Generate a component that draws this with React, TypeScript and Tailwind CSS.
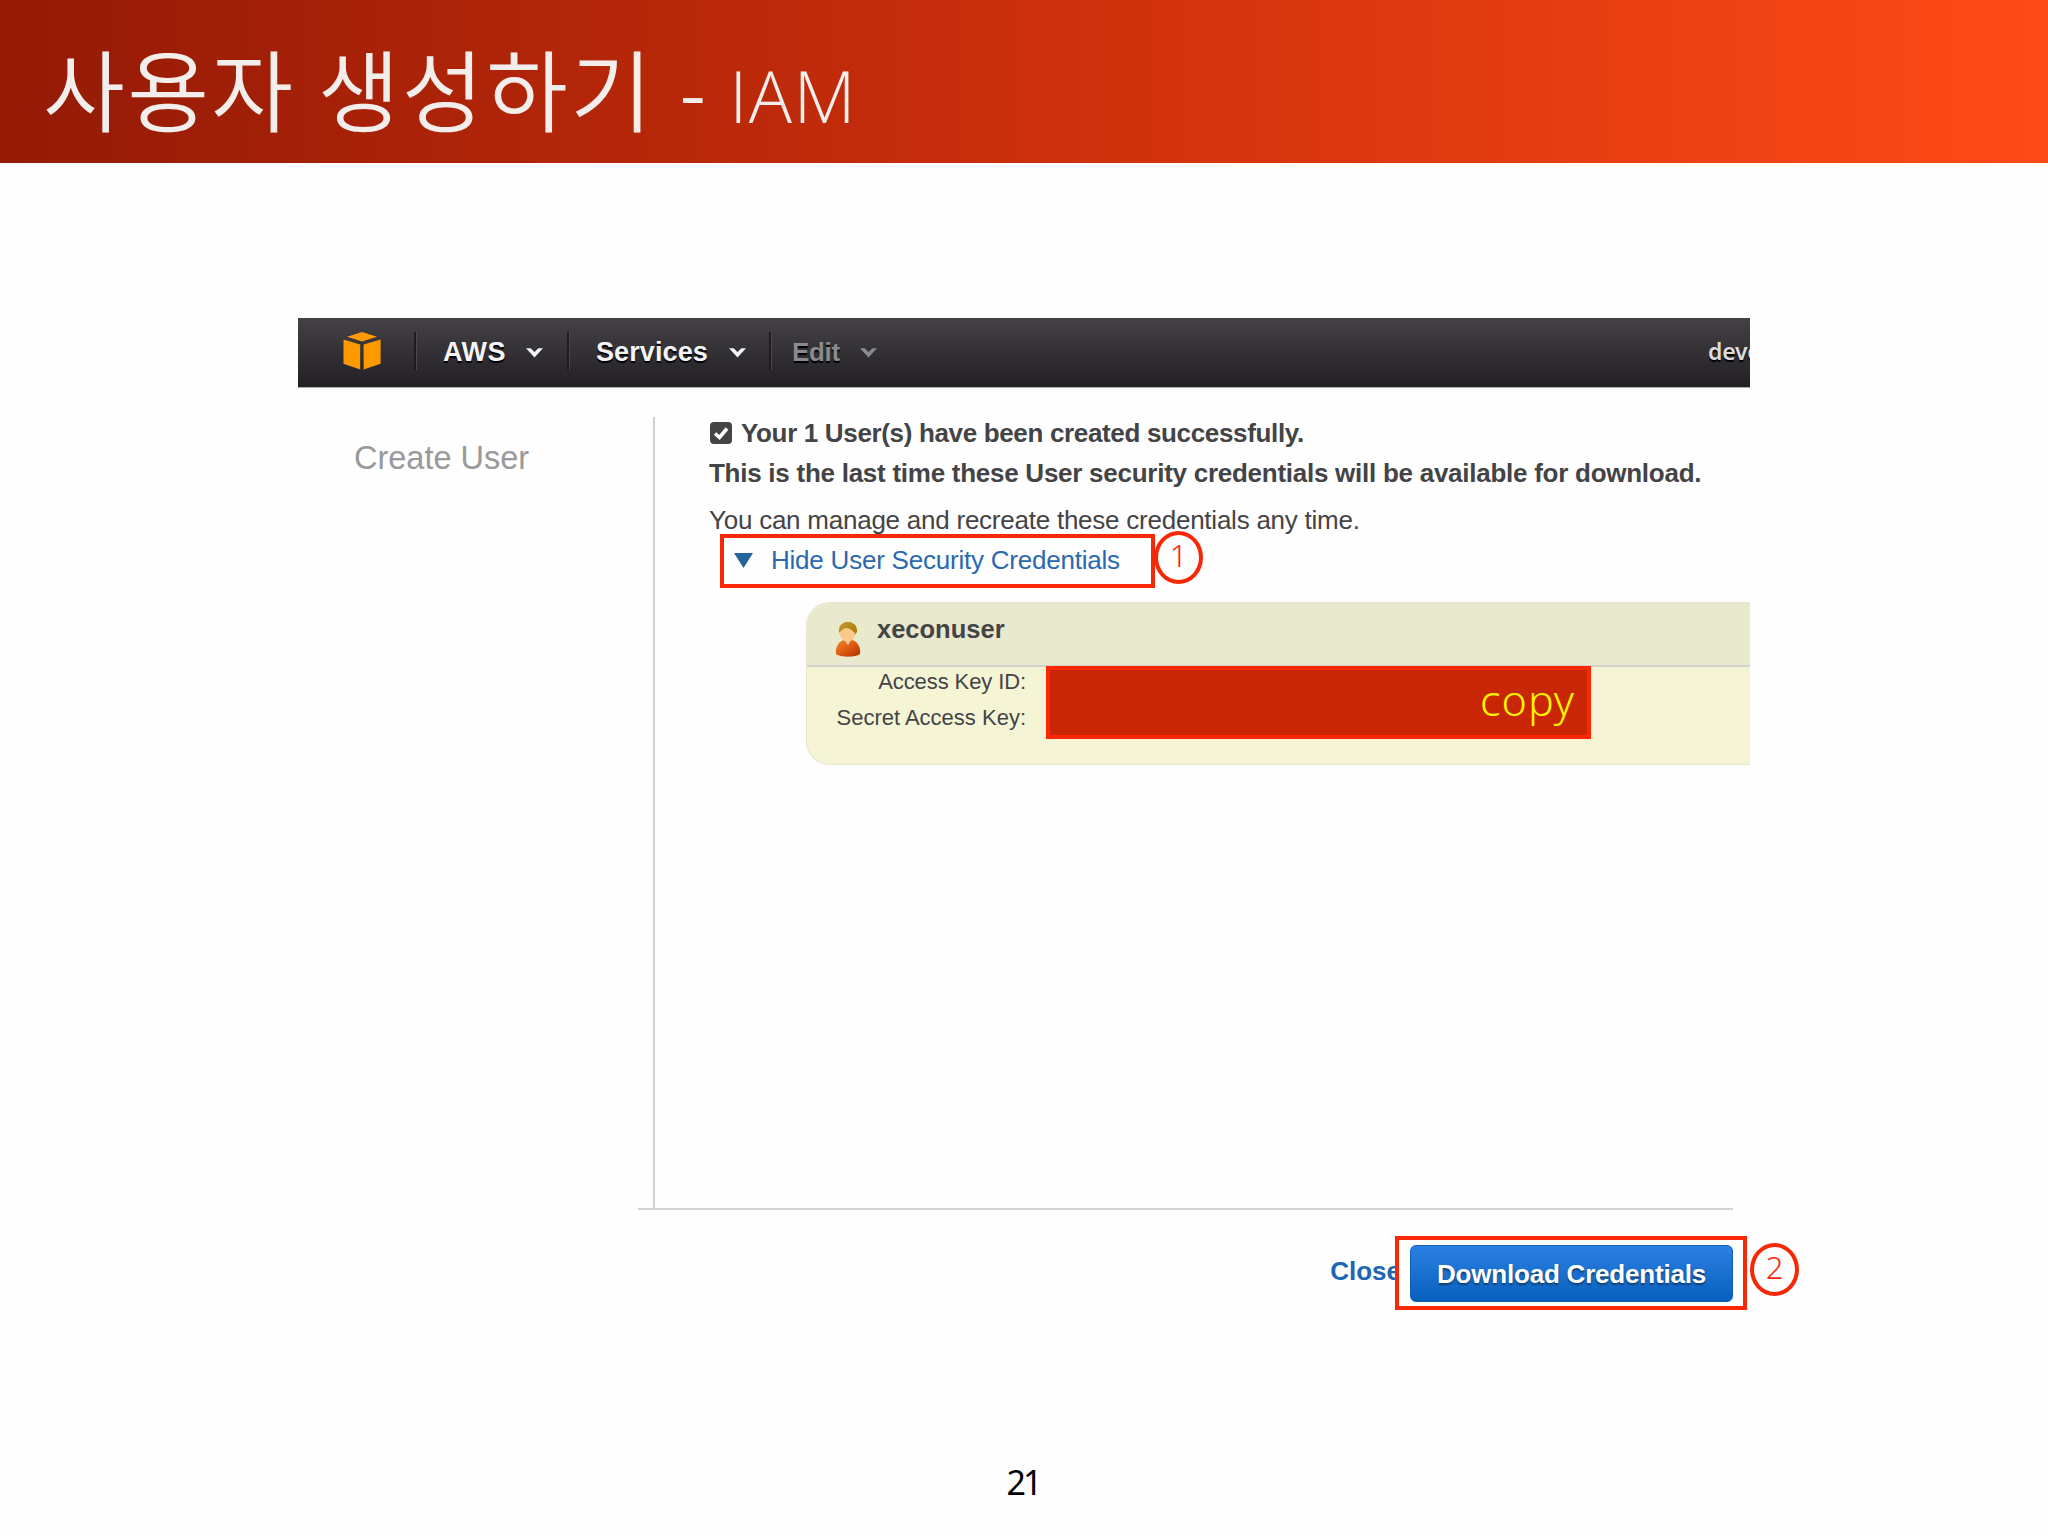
import { clsx } from "clsx"

const navItems = [
  { label: "AWS", box: "w-[153px] pl-[27px]", gap: "gap-[20px]", text: "text-[27px] tracking-[0.5px]", muted: false },
  { label: "Services", box: "w-[202px] pl-[27px]", gap: "gap-[21px]", text: "text-[27px] tracking-[0.1px]", muted: false },
  { label: "Edit", box: "w-[160px] pl-[21px]", gap: "gap-[20px]", text: "text-[26px] tracking-[-0.3px]", muted: true },
]

function Chevron({ className }: { className?: string }) {
  return (
    <svg viewBox="0 0 17 11" className={clsx("h-[11px] w-[17px]", className)} fill="currentColor">
      <path d="M0 1.2 H4.6 L8.5 5 L12.4 1.2 H17 L8.5 10.6 Z" />
    </svg>
  )
}

function CubeLogo() {
  return (
    <svg viewBox="0 0 38 38" className="h-[38px] w-[38px]" fill="#ff9900">
      <path d="M19 0 L34 4.8 L19 9.6 L4 4.8 Z" />
      <path d="M0.500 7.4 L17.2 12.4 V37.6 L0.500 31.8 Z" />
      <path d="M37.6 7.4 L20.6 12.4 V37.6 L37.6 31.8 Z" />
    </svg>
  )
}

function UserIcon() {
  return (
    <svg viewBox="0 0 26 35" className="h-[35px] w-[26px]">
      <defs>
        <linearGradient id="shirt" x1="0" y1="0" x2="1" y2="1">
          <stop offset="0" stopColor="#f08a2c" />
          <stop offset="0.5" stopColor="#dd5a12" />
          <stop offset="1" stopColor="#b32a00" />
        </linearGradient>
        <linearGradient id="hair" x1="0" y1="0" x2="1" y2="1">
          <stop offset="0" stopColor="#c79a35" />
          <stop offset="1" stopColor="#a87800" />
        </linearGradient>
      </defs>
      <path d="M1 32 C0 25 4 19 9 18 H17 C22 19 26 25 25 32 C21 35.5 5 35.5 1 32 Z" fill="url(#shirt)" />
      <path d="M4 10 C2.5 -3.5 23.500 -3.5 22 10 L19 14 H7 Z" fill="url(#hair)" />
      <path d="M4.500 10 C7 9 8 6 11 6 C15 6 17.500 9 20 11 C20 16 16.500 20 13 20 C9 20 4.500 15 4.500 10 Z" fill="#fbc98a" />
      <path d="M10.500 20 L13 23 L15 20 Z" fill="#d9cfc4" />
    </svg>
  )
}

function StepBadge({ children, className }: { children: string; className: string }) {
  return (
    <span
      className={clsx(
        "absolute flex items-center justify-center rounded-[50%] border-4 border-[#f62806] pb-[4px] font-['Noto_Sans',sans-serif] text-[31px] leading-none font-light text-[#f62806]",
        className
      )}
    >
      {children}
    </span>
  )
}

export default function App() {
  return (
    <div className="flex h-[1536px] w-[2048px] flex-col overflow-hidden bg-[#fefefe] font-['Liberation_Sans',Arial,sans-serif]">
      {/* Slide title */}
      <header className="h-[163px] shrink-0 bg-linear-to-r from-[#941a06] via-[#cb2f0c] to-[#ff4a17] pl-[43px] font-['Noto_Sans_CJK_KR',sans-serif] text-[#f3eeec]">
        <h1 className="flex items-baseline font-[350] whitespace-pre">
          <span className="text-[89px] leading-[174px] tracking-[2.3px]">사용자 생성하기</span>
          <span className="relative top-[-3px] ml-[8px] text-[77px]"> - </span>
          <span className="relative top-[-2px] ml-[6px] font-['Open_Sans',sans-serif] text-[72px] font-[350] tracking-[1.5px]">IAM</span>
        </h1>
      </header>

      {/* AWS console window */}
      <main className="relative mt-[155px] ml-[298px] w-[1452px]">
        <nav className="flex h-[70px] items-center overflow-hidden border-b border-[#a9a9ab] bg-linear-to-b from-[#444246] to-[#222024] pb-[3px]">
          <div className="flex w-[116px] pl-[45px]">
            <CubeLogo />
          </div>
          {navItems.map((item) => (
            <div
              key={item.label}
              className={clsx(
                "flex h-[38px] items-center border-l-2 border-[#1d1b1e] pt-[3px] shadow-[inset_1px_0_0_#4a484c]",
                item.box,
                item.gap,
                item.muted ? "text-[#8b8b8d]" : "text-[#f4f4f6]"
              )}
            >
              <span className={clsx("font-bold [text-shadow:0_2px_1px_#000]", item.text)}>{item.label}</span>
              <Chevron />
            </div>
          ))}
          <span className="ml-auto w-[42px] overflow-hidden font-['Noto_Sans',sans-serif] text-[23px] font-semibold tracking-[-0.2px] text-[#dcdcde] [text-shadow:0_2px_1px_#000]">
            deve
          </span>
        </nav>

        <div className="flex">
          <aside className="w-[355px] pt-[51px] pl-[56px] text-[32.500px] leading-[38px] whitespace-nowrap text-[#999]">
            Create User
          </aside>
          <section className="mt-[29px] h-[791px] flex-1 border-l-2 border-[#cfcdd2] pl-[54px] whitespace-nowrap text-[#444446]">
            <p className="flex items-center gap-[9px] pt-px text-[26px] leading-[30px] font-bold tracking-[-0.34px]">
              <svg viewBox="0 0 22 22" className="ml-px h-[22px] w-[22px]">
                <rect width="22" height="22" rx="4" fill="#444446" />
                <path d="M5 11.500 L9.500 15.500 L17 6.500" fill="none" stroke="#fff" strokeWidth="3.600" />
              </svg>
              Your 1 User(s) have been created successfully.
            </p>
            <p className="mt-[10px] text-[26px] leading-[30px] font-bold tracking-[-0.26px]">
              This is the last time these User security credentials will be available for download.
            </p>
            <p className="mt-[17px] text-[26px] leading-[30px] tracking-[-0.24px]">
              You can manage and recreate these credentials any time.
            </p>
            <div className="relative mt-[10px] flex items-center gap-[18px] pl-[25px] text-[26px] leading-[30px] tracking-[-0.22px] text-[#2a69b0]">
              <svg viewBox="0 0 19 15" className="h-[15px] w-[19px]">
                <path d="M0 0 H19 L9.500 15 Z" fill="#23659b" />
              </svg>
              Hide User Security Credentials
              <span className="absolute top-[-11px] left-[11px] h-[54px] w-[435px] border-4 border-[#f62806]" />
              <StepBadge className="top-[-14px] left-[445px] h-[53px] w-[49px]">1</StepBadge>
            </div>

            <div className="relative mt-[27px] ml-[97px] h-[163px] rounded-l-[24px] border-y border-l border-[#e6e6cc] bg-[#f5f5d6]">
              <div className="flex h-[64px] rounded-tl-[23px] border-b-2 border-[#d2d1c9] bg-[#e9e9ce] pl-[28px]">
                <div className="pt-[19px]">
                  <UserIcon />
                </div>
                <span className="pt-[11px] pl-[16px] text-[25.500px] leading-[30px] font-bold">xeconuser</span>
              </div>
              <dl className="w-[219px] text-right text-[22px] leading-[36px]">
                <dt className="-mt-[3px] tracking-[-0.1px]">Access Key ID:</dt>
                <dt>Secret Access Key:</dt>
              </dl>
              <span className="absolute top-[63px] left-[239px] flex h-[73px] w-[545px] items-center justify-end border-4 border-[#ff2604] bg-[#c82604] pr-[12px] pb-[6px] font-['Noto_Sans',sans-serif] text-[43px] leading-none font-light tracking-[1px] text-[#fff200]">
                copy
              </span>
            </div>
          </section>
        </div>

        <footer className="relative ml-[340px] w-[1095px] border-t-2 border-[#d3d1d6] pt-[35px]">
          <div className="flex justify-end">
            <span className="pt-[11px] pr-[9px] text-[26px] leading-[30px] font-bold text-[#1c66b3]">Close</span>
            <button className="h-[57px] w-[323px] rounded-[6px] border border-[#1261b4] bg-linear-to-b from-[#2a80e2] to-[#0560bd] pt-[2px] text-[26px] font-bold tracking-[-0.2px] whitespace-nowrap text-white ring-[11px] ring-[#fefefe] [text-shadow:0_2px_2px_#123f70]">
              Download Credentials
            </button>
          </div>
          <span className="absolute top-[26px] left-[757px] h-[74px] w-[352px] border-4 border-[#f62806]" />
          <StepBadge className="top-[33px] left-[1112px] h-[53px] w-[49px]">2</StepBadge>
        </footer>
      </main>

      {/* Page number */}
      <p className="mt-auto mb-[28px] pr-[2px] text-center font-['Noto_Sans',sans-serif] text-[34px] tracking-[-3px] text-black">
        21
      </p>
    </div>
  )
}
